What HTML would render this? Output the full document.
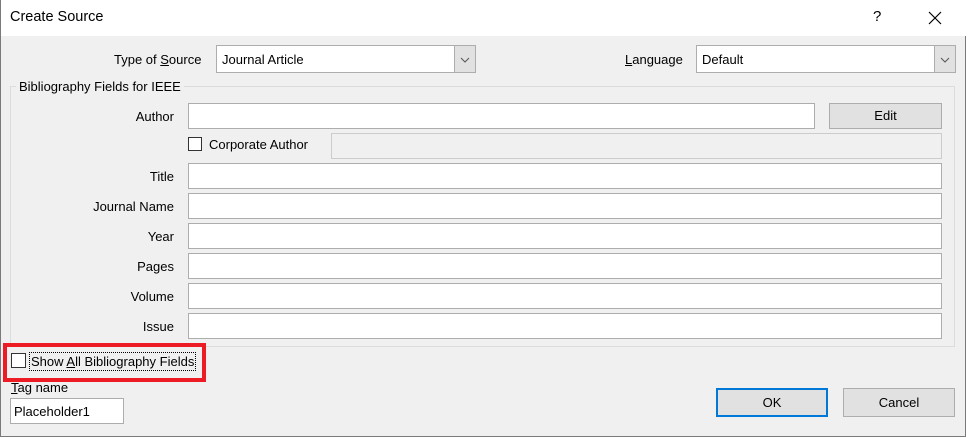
<!DOCTYPE html><html><head><style>
body{margin:0;width:972px;height:438px;background:#fff;font-family:"Liberation Sans",sans-serif;font-size:13px;color:#000;position:relative;overflow:hidden}
.a{position:absolute}
.win{left:0;top:0;width:964px;height:436px;border:1px solid #7a7a7a;border-top:none;background:#f0f0f0}
.inp{position:absolute;background:#fff;border:1px solid #adadad;box-sizing:border-box}
.lbl{position:absolute;text-align:right;width:150px;left:24px}
.btn{position:absolute;background:#e1e1e1;border:1px solid #adadad;box-sizing:border-box;text-align:center}
.cb{position:absolute;width:14px;height:14px;border:1px solid #333;background:#fff;box-sizing:border-box}
</style></head><body>
<div class="a win"></div>
<div class="a" style="left:0;top:0;width:965px;height:36px;background:#fff;border-left:1px solid #7a7a7a"></div>
<div class="a" style="left:10px;top:9px;font-size:14.5px">Create Source</div>
<div class="a" style="left:873px;top:8px;font-size:15px">?</div>
<svg class="a" style="left:928px;top:11px" width="14" height="14"><path d="M1 1L13 13M13 1L1 13" stroke="#000" stroke-width="1.2"/></svg>

<div class="a" style="left:114px;top:52px">Type of <u>S</u>ource</div>
<div class="inp" style="left:216px;top:45px;width:260px;height:28px"><span class="a" style="left:5px;top:6px">Journal Article</span><div class="a" style="right:0;top:0;width:20px;height:26px;background:#e1e1e1;border-left:1px solid #adadad"><svg width="20" height="26"><path d="M6 12l4 4 4-4" fill="none" stroke="#555"/></svg></div></div>
<div class="a" style="left:625px;top:52px"><u>L</u>anguage</div>
<div class="inp" style="left:696px;top:45px;width:260px;height:28px"><span class="a" style="left:5px;top:6px">Default</span><div class="a" style="right:0;top:0;width:20px;height:26px;background:#e1e1e1;border-left:1px solid #adadad"><svg width="20" height="26"><path d="M6 12l4 4 4-4" fill="none" stroke="#555"/></svg></div></div>

<div class="a" style="left:10px;top:86px;width:943px;height:259px;border:1px solid #dcdcdc"></div>
<div class="a" style="left:16px;top:79px;background:#f0f0f0;padding:0 3px">Bibliography Fields for IEEE</div>

<div class="lbl" style="top:109px">Author</div>
<div class="inp" style="left:188px;top:103px;width:627px;height:26px"></div>
<div class="btn" style="left:829px;top:103px;width:113px;height:26px;line-height:24px">Edit</div>
<div class="cb" style="left:188px;top:137px"></div>
<div class="a" style="left:209px;top:137px">Corporate Author</div>
<div class="a" style="left:331px;top:133px;width:611px;height:26px;border:1px solid #ccc;box-sizing:border-box;background:#f0f0f0"></div>

<div class="lbl" style="top:169px">Title</div><div class="inp" style="left:188px;top:163px;width:754px;height:26px"></div>
<div class="lbl" style="top:199px">Journal Name</div><div class="inp" style="left:188px;top:193px;width:754px;height:26px"></div>
<div class="lbl" style="top:229px">Year</div><div class="inp" style="left:188px;top:223px;width:754px;height:26px"></div>
<div class="lbl" style="top:259px">Pages</div><div class="inp" style="left:188px;top:253px;width:754px;height:26px"></div>
<div class="lbl" style="top:289px">Volume</div><div class="inp" style="left:188px;top:283px;width:754px;height:26px"></div>
<div class="lbl" style="top:319px">Issue</div><div class="inp" style="left:188px;top:313px;width:754px;height:26px"></div>

<div class="a" style="left:3px;top:343px;width:195px;height:31px;border:4px solid #ed1c24"></div>
<div class="cb" style="left:11px;top:353px;width:15px;height:15px"></div>
<div class="a" style="left:29px;top:352px;border:1px dotted #000;padding:1px 1px">Show <u>A</u>ll Bibliography Fields</div>
<div class="a" style="left:11px;top:380px"><u>T</u>ag name</div>
<div class="inp" style="left:10px;top:398px;width:114px;height:26px"><span class="a" style="left:3px;top:5px">Placeholder1</span></div>
<div class="btn" style="left:716px;top:388px;width:112px;height:29px;border:2px solid #0078d7;line-height:25px">OK</div>
<div class="btn" style="left:843px;top:388px;width:112px;height:29px;line-height:27px">Cancel</div>
</body></html>
